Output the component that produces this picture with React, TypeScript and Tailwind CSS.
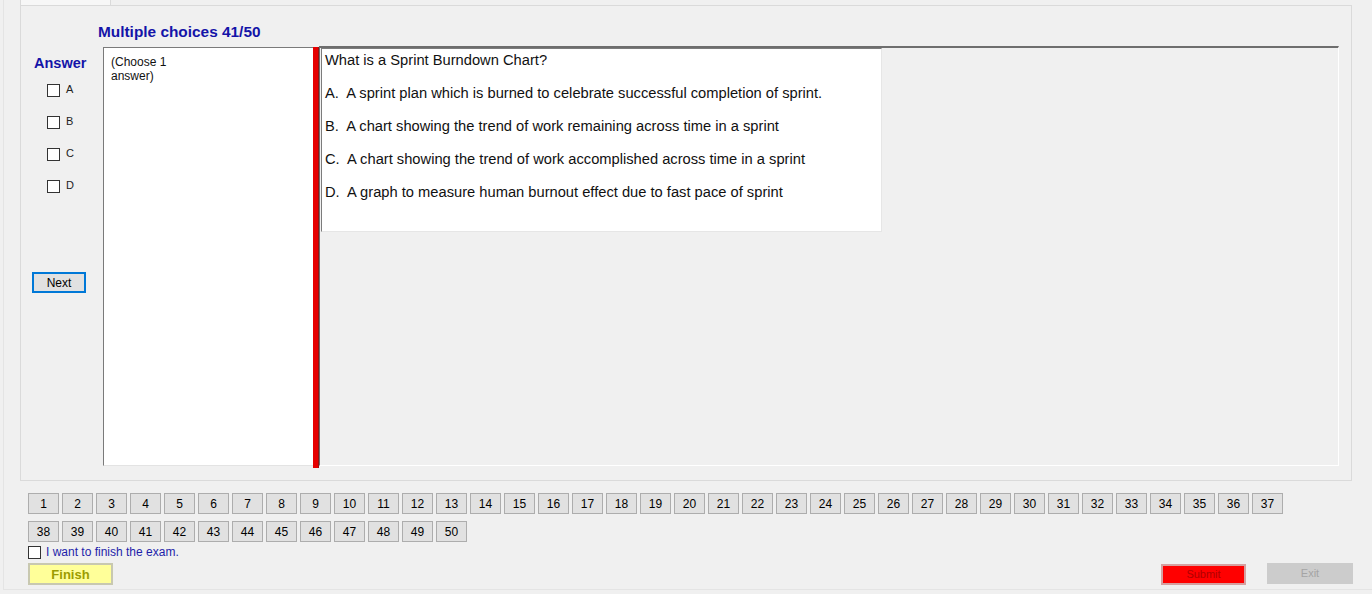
import React from "react"

const options = [
  { key: "A", text: "A sprint plan which is burned to celebrate successful completion of sprint." },
  { key: "B", text: "A chart showing the trend of work remaining across time in a sprint" },
  { key: "C", text: "A chart showing the trend of work accomplished across time in a sprint" },
  { key: "D", text: "A graph to measure human burnout effect due to fast pace of sprint" },
]

const row1 = Array.from({ length: 37 }, (_, i) => i + 1)
const row2 = Array.from({ length: 13 }, (_, i) => i + 38)

function Box() {
  return <span className="block w-[13px] h-[13px] border border-[#333] bg-white shrink-0" />
}

function NumButton({ n }: { n: number }) {
  return (
    <button className="w-[31px] h-[21px] bg-[#e1e1e1] border border-[#adadad] text-[12px] text-black leading-none">
      {n}
    </button>
  )
}

export default function App() {
  return (
    <div
      className="w-[1372px] h-[594px] bg-[#f0f0f0] overflow-hidden text-black"
      style={{ fontFamily: '"Liberation Sans", Arial, sans-serif' }}
    >
      <div className="ml-[3px] h-[590px] border-l border-b border-[#e4e4e4]">
        {/* tab header */}
        <div className="ml-[16px] w-[91px] h-[5px] bg-[#f7f7f7] border-x border-[#dadada]" />

        {/* tab page */}
        <div className="ml-[16px] w-[1332px] h-[476px] border border-[#dadada] bg-[#f0f0f0] flex flex-col">
          <div className="mt-[18px] pl-[77px] h-[16px] text-[15.4px] leading-[16px] font-bold text-[#1414a8]">
            Multiple choices 41/50
          </div>

          <div className="mt-[6px] flex h-[420px]">
            {/* answer column */}
            <div className="w-[82px] flex flex-col">
              <div className="mt-[9px] pl-[13px] text-[14.5px] leading-[16px] font-bold text-[#1414a8]">Answer</div>
              <div className="mt-[13px] flex flex-col">
                {options.map((o) => (
                  <div key={o.key} className="h-[32px] flex items-start gap-[6px] pl-[26px]">
                    <Box />
                    <span className="text-[11px] leading-[11px] text-[#222]">{o.key}</span>
                  </div>
                ))}
              </div>
              <button className="mt-[60px] ml-[11px] w-[54px] h-[21px] bg-[#e1e1e1] border-2 border-[#0078d7] text-[12px] leading-none">
                Next
              </button>
            </div>

            {/* notes box */}
            <div className="mt-[1px] w-[210px] h-[419px] bg-white border-l border-t border-[#7a7a7a] border-b-[#e3e3e3] border-b pt-[7px] pl-[7px] text-[12px] leading-[14px] text-[#111]">
              (Choose 1
              <br />
              answer)
            </div>

            {/* red splitter */}
            <div className="w-[6px] h-[421px] mt-[1px] bg-[#e60000] border-r border-[#9a1010]" />

            {/* question panel */}
            <div className="w-[1020px] h-full border-t-2 border-l border-[#6e6e6e] border-r border-r-white border-b border-b-white flex items-start">
              <div className="ml-[1px] w-[561px] h-[184px] bg-white border-l border-t border-[#7c7c7c] border-r border-r-[#e6e6e6] border-b border-b-[#e6e6e6] pt-[1px] pl-[3px] flex flex-col gap-[13px] text-[14.7px] leading-[20px] text-[#111]">
                <div className="h-[20px]">What is a Sprint Burndown Chart?</div>
                {options.map((o) => (
                  <div key={o.key} className="h-[20px] whitespace-pre">
                    {o.key}.  {o.text}
                  </div>
                ))}
              </div>
            </div>
          </div>
        </div>

        {/* question navigator */}
        <div className="mt-[12px] ml-[24px] flex flex-col gap-[7px]">
          <div className="flex gap-[3px]">
            {row1.map((n) => (
              <NumButton key={n} n={n} />
            ))}
          </div>
          <div className="flex gap-[3px]">
            {row2.map((n) => (
              <NumButton key={n} n={n} />
            ))}
          </div>
        </div>

        <div className="mt-[3px] ml-[24px] flex items-center gap-[5px]">
          <Box />
          <span className="text-[12px] leading-[14px] text-[#1e1eaa]">I want to finish the exam.</span>
        </div>

        <div className="mt-[4px] ml-[24px] mr-[19px] flex items-start justify-between">
          <button className="w-[85px] h-[22px] bg-[#ffff99] border-2 border-[#c8c8b0] text-[13px] font-bold text-[#9c9c00] leading-none">
            Finish
          </button>
          <div className="flex items-start gap-[21px]">
            <button className="mt-[1px] w-[85px] h-[21px] bg-[#ff0000] border-2 border-[#d6a0a0] text-[11px] text-[#b00000] leading-none">
              Submit
            </button>
            <button className="w-[86px] h-[21px] bg-[#cccccc] text-[11px] text-[#a4a4a4] leading-none">
              Exit
            </button>
          </div>
        </div>
      </div>
    </div>
  )
}
